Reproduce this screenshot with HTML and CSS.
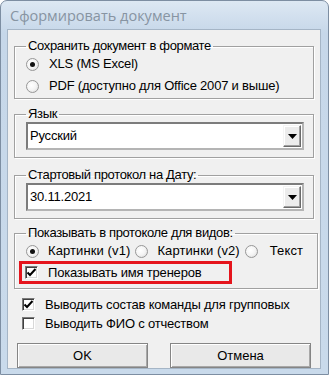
FILE: index.html
```html
<!DOCTYPE html>
<html lang="ru">
<head>
  <meta charset="UTF-8">
  <title>Сформировать документ</title>
  <meta name="viewport" content="width=device-width, initial-scale=1.0">
  <link rel="stylesheet" href="styles.css">
</head>
<body>
  <div class="window">
    <div class="titlebar">Сформировать документ</div>

    <div class="client">
      <fieldset class="group g-format">
        <legend>Сохранить документ в формате</legend>
        <div class="opt first"><span class="radio on"></span>XLS (MS Excel)</div>
        <div class="opt"><span class="radio"></span>PDF (доступно для Office 2007 и выше)</div>
      </fieldset>

      <fieldset class="group g-lang">
        <legend>Язык</legend>
        <div class="combo">
          <span class="combo-value">Русский</span>
          <span class="combo-btn"><svg width="9" height="5" viewBox="0 0 9 5"><path d="M0 0h9L4.5 5z" fill="#000"/></svg></span>
        </div>
      </fieldset>

      <fieldset class="group g-date">
        <legend>Стартовый протокол на Дату:</legend>
        <div class="combo">
          <span class="combo-value">30.11.2021</span>
          <span class="combo-btn"><svg width="9" height="5" viewBox="0 0 9 5"><path d="M0 0h9L4.5 5z" fill="#000"/></svg></span>
        </div>
      </fieldset>

      <fieldset class="group g-view">
        <legend>Показывать в протоколе для видов:</legend>
        <div class="radios">
          <span class="ropt"><span class="radio on"></span>Картинки (v1)</span>
          <span class="ropt"><span class="radio"></span>Картинки (v2)</span>
          <span class="ropt"><span class="radio"></span>Текст</span>
        </div>
        <div class="check marked">
          <span class="box"><svg width="11" height="11" viewBox="0 0 11 11"><path d="M1.5 5.5l2.5 2.5 5.5-6" fill="none" stroke="#000" stroke-width="2"/></svg></span>
          Показывать имя тренеров
        </div>
      </fieldset>

      <div class="checks">
        <div class="check">
          <span class="box"><svg width="11" height="11" viewBox="0 0 11 11"><path d="M1.5 5.5l2.5 2.5 5.5-6" fill="none" stroke="#000" stroke-width="2"/></svg></span>
          Выводить состав команды для групповых
        </div>
        <div class="check">
          <span class="box"></span>
          Выводить ФИО с отчеством
        </div>
      </div>

      <div class="buttons">
        <button class="btn btn-ok">OK</button>
        <button class="btn btn-cancel">Отмена</button>
      </div>
    </div>
  </div>
</body>
</html>
```

FILE: styles.css
```css
* {
  box-sizing: border-box;
}
body {
  margin: 0;
  background: #fff;
  font-family: "Liberation Sans", Arial, sans-serif;
  font-size: 13px;
  letter-spacing: -0.2px;
  color: #000;
  white-space: nowrap;
}
.window {
  width: 329px;
  height: 375px;
  border: 1px solid #7d8ea2;
  border-radius: 7px 7px 0 0;
  background: linear-gradient(#dde8f3, #c6d7e9 32px, #c9daeb);
  display: flex;
  flex-direction: column;
  overflow: hidden;
}
.titlebar {
  height: 31px;
  padding-left: 9px;
  display: flex;
  align-items: center;
  font-family: "Open Sans", sans-serif;
  font-size: 14.5px;
  letter-spacing: 0;
  color: #8794a2;
}
.client {
  flex: 1;
  margin: 0 7px 5px 6px;
  border: 1px solid #a5b5c6;
  background: #f0f0f0;
  padding: 8px 6px 0 6px;
}

/* group boxes */
.group {
  margin: 0;
  padding: 0 9px 0 11px;
  border: 1px solid #a0a0a0;
  box-shadow: inset 1px 1px 0 #fff, 1px 1px 0 #fff;
  line-height: 16px;
}
.group legend {
  padding: 0 2px;
  line-height: 16px;
  letter-spacing: -0.35px;
}
.g-format {
  padding-bottom: 1px;
}
.g-lang {
  margin-top: 7px;
  padding-bottom: 7px;
}
.g-date {
  margin-top: 9px;
  padding-bottom: 7px;
}
.g-view {
  margin-top: 6px;
  padding-bottom: 4px;
}
.g-lang .combo {
  margin-top: 0;
}

.opt {
  height: 22px;
  display: flex;
  align-items: center;
}
.opt.first {
  margin-top: -1px;
}
.opt .radio {
  margin-right: 10px;
}

.radio {
  width: 13px;
  height: 13px;
  border-radius: 50%;
  border: 1px solid #979797;
  background: radial-gradient(circle at 40% 40%, #fff, #f4f4f4 50%, #d6d6d6);
  display: inline-flex;
  align-items: center;
  justify-content: center;
  flex: none;
}
.radio.on::after {
  content: "";
  width: 5px;
  height: 5px;
  border-radius: 50%;
  background: #111;
}

.radios {
  height: 20px;
  display: flex;
  align-items: center;
  letter-spacing: 0.1px;
}
.ropt {
  display: inline-flex;
  align-items: center;
  margin-right: 5px;
}
.ropt .radio {
  margin-right: 9px;
}
.ropt:nth-child(3) .radio {
  margin-right: 12px;
}

/* combo boxes */
.combo {
  height: 28px;
  display: flex;
  border: 2px solid;
  border-color: #7c7c7c #b4b4b4 #b4b4b4 #7c7c7c;
  background: #fff;
  padding: 1px;
}
.combo-value {
  flex: 1;
  display: flex;
  align-items: center;
  padding-left: 1px;
}
.combo-btn {
  width: 18px;
  display: flex;
  align-items: center;
  justify-content: center;
  background: #ececec;
  border: 1px solid;
  border-color: #f4f4f4 #6a6a6a #6a6a6a #f4f4f4;
  box-shadow: inset -1px -1px 0 #a0a0a0, inset 1px 1px 0 #fff;
}

/* check boxes */
.check {
  display: flex;
  align-items: center;
  height: 19px;
}
.box {
  width: 13px;
  height: 13px;
  flex: none;
  margin-right: 10px;
  background: #fff;
  border: 1px solid;
  border-color: #7a7a7a #fff #fff #7a7a7a;
  box-shadow: inset 1px 1px 0 #404040, inset -1px -1px 0 #d8d8d8;
  display: flex;
  align-items: center;
  justify-content: center;
}
.check.marked {
  width: 213px;
  height: 23px;
  margin-left: -7px;
  padding-left: 3px;
  border: 3px solid #e5141c;
}
.checks {
  margin-top: 6px;
  padding-left: 8px;
}

/* buttons */
.buttons {
  display: flex;
  margin-top: 10px;
  padding-left: 3px;
  gap: 22px;
}
.btn {
  height: 25px;
  font-family: "Liberation Sans", Arial, sans-serif;
  font-size: 13px;
  letter-spacing: 0;
  color: #000;
  background: #e9e9e9;
  border: 1px solid #858585;
  box-shadow: inset 1px 1px 0 #fff, inset -1px -1px 0 #a8a8a8;
  padding: 0;
}
.btn-ok {
  width: 131px;
}
.btn-cancel {
  width: 141px;
}
```
